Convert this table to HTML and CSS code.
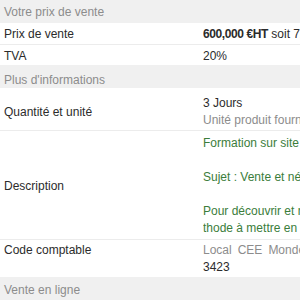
FILE: index.html
```html
<!DOCTYPE html>
<html lang="fr">
<head>
<meta charset="utf-8">
<link rel="stylesheet" href="styles.css">
</head>
<body>
<div class="card">
  <div class="sec sec-first">Votre prix de vente</div>
  <div class="row">
    <div class="label">Prix de vente</div>
    <div class="value"><b>600,000 €HT</b> soit 720,000 €TTC</div>
  </div>
  <div class="row row-last">
    <div class="label">TVA</div>
    <div class="value">20%</div>
  </div>
  <div class="sec sec-mid">Plus d'informations</div>
  <div class="row row-qty">
    <div class="label">Quantité et unité</div>
    <div class="value lines">
      <div>3 Jours</div>
      <div class="muted">Unité produit fournis : Jour</div>
    </div>
  </div>
  <div class="row row-desc">
    <div class="label">Description</div>
    <div class="value lines green">
      <div>Formation sur site</div>
      <div>&nbsp;</div>
      <div>Sujet : Vente et négociation</div>
      <div>&nbsp;</div>
      <div>Pour découvrir et maîtriser la mé</div>
      <div>thode à mettre en œuvre</div>
    </div>
  </div>
  <div class="row row-code">
    <div class="label label-top">Code comptable</div>
    <div class="value lines">
      <div class="codes">
        <span class="muted">Local</span>
        <span class="muted">CEE</span>
        <span class="muted">Monde</span>
        <span>3423</span>
        <span></span>
        <span></span>
      </div>
    </div>
  </div>
  <div class="sec sec-last">Vente en ligne</div>
</div>
</body>
</html>
```

FILE: styles.css
```css
html, body {
  margin: 0;
  padding: 0;
  background: #ffffff;
}
body {
  width: 300px;
  height: 300px;
  overflow: hidden;
  font-family: "Liberation Sans", Arial, Helvetica, sans-serif;
  font-size: 12px;
  color: #2b2b2b;
}
.card {
  width: 560px;
}
.sec {
  box-sizing: border-box;
  height: 23px;
  padding-left: 4px;
  line-height: 14px;
  background: #f0f0f0;
  color: #8c8c8c;
}
.sec-first { padding-top: 5px; }
.sec-mid { padding-top: 8px; }
.sec-last { padding-top: 6px; height: 30px; }
.row {
  display: grid;
  grid-template-columns: 203px 1fr;
  align-items: center;
  padding: 4px 0 3px;
  line-height: 14px;
  border-bottom: 1px solid #ececec;
}
.row-last {
  border-bottom: none;
  padding-bottom: 2px;
}
.label {
  padding-left: 4px;
  white-space: nowrap;
}
.label-top {
  align-self: start;
}
.value {
  white-space: nowrap;
  overflow: hidden;
}
.value b {
  font-weight: bold;
  letter-spacing: -0.4px;
}
.lines {
  line-height: 17px;
}
.row-qty {
  padding: 7px 0 1px;
}
.row-desc {
  padding: 4px 0 2px;
}
.row-code {
  padding: 2px 0 1px;
  border-bottom: none;
}
.row-code .label {
  line-height: 17px;
}
.muted {
  color: #8c8c8c;
}
.green {
  color: #3b7d3b;
}
.codes {
  display: grid;
  grid-template-columns: auto auto auto;
  justify-content: start;
  column-gap: 6px;
}
```
